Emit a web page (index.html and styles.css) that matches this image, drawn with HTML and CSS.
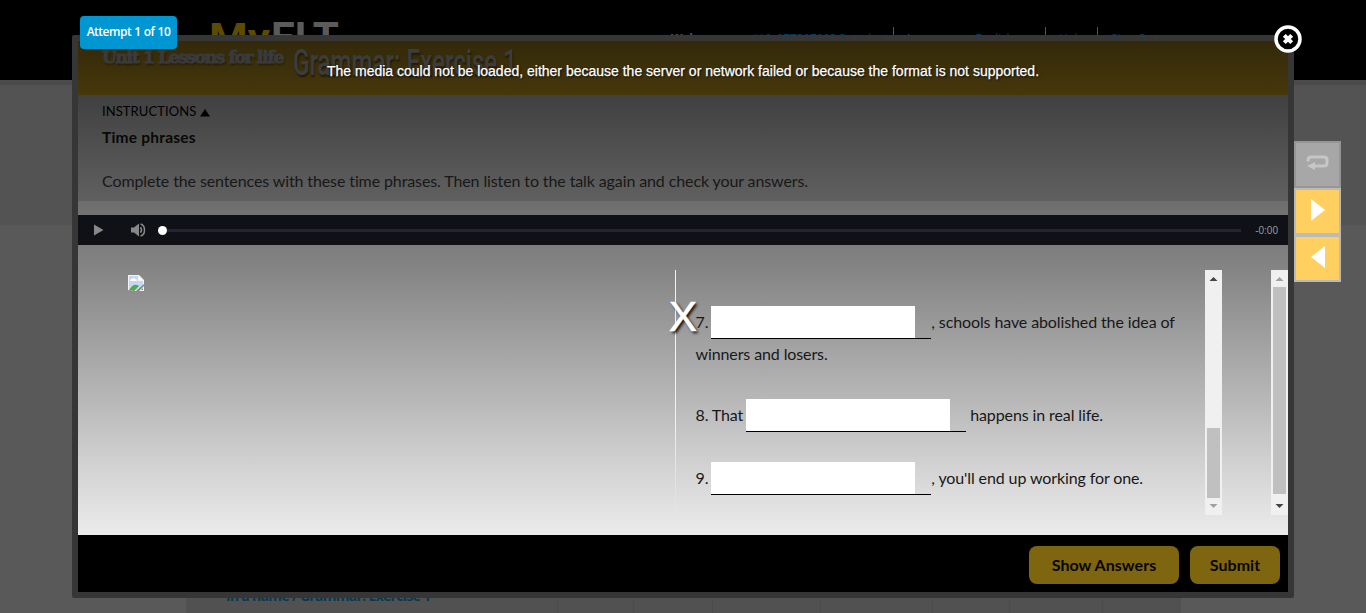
FILE: index.html
```
<!DOCTYPE html>
<html lang="en">
<head>
<meta charset="utf-8">
<title>Grammar: Exercise 1</title>
<link rel="stylesheet" href="styles.css">
</head>
<body>
<header class="site-header">
  <svg class="logo" width="150" height="40"><text class="logo-my" x="-1" y="38" textLength="61" lengthAdjust="spacingAndGlyphs">My</text><text class="logo-elt" x="61" y="38" textLength="68" lengthAdjust="spacingAndGlyphs">ELT</text></svg>
  <nav class="user-nav">
    <span class="welcome">Welcome, <a>ji10_977297993@student</a></span>
    <span class="language">Language: <a>English ▼</a></span>
    <span class="help"><a>Help</a></span>
    <span class="signout"><a>Sign Out</a></span>
  </nav>
</header>
<div class="band"></div>
<main class="page-body">
  <div class="results"><div class="result-name">In a name / Grammar: Exercise 1</div><div></div><div></div><div></div><div></div><div></div><div></div></div>
</main>

<section class="modal">
  <div class="modal-header">
    <span class="unit">Unit 1 Lessons for life</span>
    <svg class="exercise" width="230" height="46"><text x="0" y="34" textLength="224" lengthAdjust="spacingAndGlyphs">Grammar: Exercise 1</text></svg>
  </div>
  <div class="instructions">
    <div class="toggle">INSTRUCTIONS <svg width="10" height="8"><path d="M0 7.500L5 0l5 7.500z"/></svg></div>
    <div class="topic">Time phrases</div>
    <div class="direction">Complete the sentences with these time phrases. Then listen to the talk again and check your answers.</div>
  </div>
  <div class="spacer"></div>
  <div class="player">
    <svg class="play" width="10" height="12"><path d="M0 .5L9.500 6 0 11.500z"/></svg>
    <svg class="volume" width="15" height="14"><path d="M0 4.500h3L8 .5v13L3 9.500H0z"/><path class="wave" d="M9.500 4.200q2 2.800 0 5.600M9.500 1q4 1 4 6t-4 6"/></svg>
    <div class="knob"></div><div class="track"></div>
    <span class="time">-0:00</span>
  </div>
  <div class="content">
    <div class="picture"><svg width="16" height="16"><path fill="#f4f4f4" d="M0 0h11l5 5v11H0z"/><path fill="#c5d7f5" d="M1 1h9v5h5v4l-6 5H1z"/><path fill="#fff" d="M2 6q0-2 2-2 2-2 3 0 2 0 2 2z"/><path fill="#4bb243" d="M1 15q5-8 10-4l-4 4zM13 15l2-2v2z"/><path fill="#999" d="M0 15h7v1H0z"/><path fill="#fff" d="M11 2l3 3h-3z"/><path fill="#858585" d="M8 16l8-7v2l-5 5z"/></svg></div>
    <div class="questions">
      <p class="q q7">7. <span class="blank"><input></span>, schools have abolished the idea of<br><span class="second-line">winners and losers.</span></p>
      <p class="q q8">8. That <span class="blank"><input></span> happens in real life.</p>
      <p class="q q9">9. <span class="blank"><input></span>, you'll end up working for one.</p>
    </div>
    <div class="scrollbar inner"><svg width="17" height="17"><path class="on" d="M4.500 11l4-4 4 4z"/></svg><div class="thumb"></div><svg width="17" height="17"><path class="off" d="M4.500 6l4 4 4-4z"/></svg></div>
    <div class="scrollbar outer"><svg width="17" height="17"><path class="off" d="M4.500 11l4-4 4 4z"/></svg><div class="thumb"></div><svg width="17" height="17"><path class="on" d="M4.500 6l4 4 4-4z"/></svg></div>
  </div>
  <div class="modal-footer"><button class="show">Show Answers</button><button class="submit">Submit</button></div>
</section>

<div class="attempt">Attempt 1 of 10</div>
<div class="media-error">The media could not be loaded, either because the server or network failed or because the format is not supported.</div>
<div class="error-close">X</div>
<svg class="close" width="30" height="30"><circle cx="15" cy="15" r="12" /><path d="M11.300 11.300l7.400 7.400M18.700 11.300l-7.400 7.400"/></svg>
<nav class="side-nav">
  <div class="side repeat"><svg width="23" height="15"><path class="loop" d="M2 6.500V5Q2 2 5 2h13q3 0 3 3v3q0 3-3 3H8"/><path class="head" d="M1 11l8-4v8z"/></svg></div>
  <div class="side next"><svg width="14" height="22"><path d="M0 0l14 11L0 22z"/></svg></div>
  <div class="side prev"><svg width="14" height="22"><path d="M14 0v22L0 11z"/></svg></div>
</nav>
</body>
</html>
```
FILE: styles.css
```
* { box-sizing: border-box; }
body { margin: 0; height: 613px; overflow: hidden; position: relative; background: #595959; font-family: Lato, sans-serif; font-size: 16px; color: #181818; }
svg { display: block; flex: none; }
.site-header { height: 80px; background: #000; display: flex; padding: 14px 0 0 210px; }
.logo { overflow: visible; }
.logo text { font: bold 42px Roboto, sans-serif; }
.logo .logo-my { font-size: 40px; fill: #5c4b00; }
.logo .logo-elt { fill: #5b5b5b; }
.user-nav { display: flex; margin: 13px 0 0 311px; height: 30px; font: 12px/23px "Open Sans", sans-serif; color: #555; white-space: nowrap; }
.user-nav a { color: #003b5b; }
.user-nav span { border-right: 1px solid #555; }
.welcome { width: 223px; font-weight: bold; letter-spacing: -.2px; }
.welcome a { margin-left: 22px; font-weight: normal; }
.language { width: 152px; padding-left: 13px; }
.language a { margin-left: 8px; letter-spacing: -.2px; }
.help { width: 52px; padding-left: 13px; }
.user-nav .signout { padding-left: 13px; border: 0; }
.band { height: 145px; background: #535353; border-top: 5px solid #4b4b4b; }
.page-body { height: 388px; padding: 358px 185px 0 186px; }
.results { height: 30px; background: #515151; display: grid; grid-template-columns: 372px 76px 79px 108px 112px 77px 93px 78px; }
.results div { border-right: 1px solid #4c4c4c; }
.results .result-name { padding-left: 40px; font: bold 14px/26px "Open Sans", sans-serif; letter-spacing: -.7px; color: #063a52; white-space: nowrap; }
.modal { position: absolute; left: 72px; top: 35px; width: 1222px; height: 563px; border: 6px solid #363636; border-radius: 2px; display: flex; flex-direction: column; overflow: hidden; }
.modal-header { height: 54px; background: linear-gradient(#33290a, #46380a); display: flex; padding-left: 24px; color: #3a3a3c; }
.unit { width: 191px; font: 900 17px/32px "DejaVu Serif", serif; letter-spacing: -1.300px; white-space: nowrap; text-shadow: 1px 2px 2px #211b05; -webkit-text-stroke: 1px #3a3a3c; }
.exercise { overflow: visible; }
.exercise text { font: 500 36px Roboto, sans-serif; fill: #3c3c3e; text-shadow: 1px 2px 2px #211b05; }
.instructions { height: 106px; padding: 7px 24px 0; background: linear-gradient(#404040, #606060); }
.toggle { display: flex; gap: 4px; align-items: center; font-size: 13px; line-height: 18px; letter-spacing: .08px; color: #000; }
.toggle svg { margin-top: 3px; }
.topic { font-weight: bold; font-size: 15.500px; line-height: 20px; letter-spacing: .22px; margin-top: 7px; color: #080808; }
.direction { line-height: 20px; margin-top: 24px; letter-spacing: -.11px; }
.spacer { height: 14px; background: linear-gradient(#6d6d6d, #747474); }
.player { height: 30px; background: #101116; display: flex; align-items: center; padding: 0 10px 0 16px; }
.play { fill: #888; }
.volume { margin-left: 27px; fill: #888; }
.wave { fill: none; stroke: #888; stroke-width: 1.500; }
.knob { width: 9px; height: 9px; border-radius: 50%; background: #fff; margin-left: 12px; }
.track { height: 3px; flex: 1; background: #22262f; }
.time { width: 37px; text-align: right; color: #999; font: 10px "Liberation Sans", sans-serif; }
.content { height: 290px; padding: 25px 0 20px 50px; display: flex; background: linear-gradient(#7d7d7d 0%, #858585 9%, #9c9c9c 29%, #b7b7b7 53%, #d2d2d2 76%, #e2e2e2 91%, #ebebeb 100%); }
.picture { width: 547px; padding-top: 5px; }
.questions { width: 530px; padding: 36px 0 0 19.500px; border-left: 1px solid; border-image: linear-gradient(#f2f2f2 65%, transparent) 1; white-space: nowrap; letter-spacing: -.11px; }
.q { margin: 0; line-height: 32px; }
.q7 { height: 93px; }
.q8 { height: 63px; }
.second-line { display: inline-block; margin-top: -2px; vertical-align: top; }
.blank { display: inline-block; width: 220px; height: 33px; border-bottom: 1px solid #000; vertical-align: middle; margin: -1px 0 1px -1px; }
.blank input { display: block; width: 204px; height: 32px; border: 0; padding: 0; background: #fff; }
.scrollbar { width: 17px; height: 245px; background: #f0f0f0; display: flex; flex-direction: column; }
.scrollbar .thumb { width: 13px; margin: 0 2px; background: #c0c0c0; }
.inner .thumb { height: 70px; margin-top: 141px; }
.outer { margin-left: 49px; }
.outer .thumb { height: 207px; margin-bottom: 4px; }
.on { fill: #444; }
.off { fill: #a0a0a0; }
.modal-footer { height: 57px; background: #000; display: flex; justify-content: flex-end; gap: 11px; padding: 11px 8px 0; }
button { height: 38px; border: 0; border-radius: 8px; padding: 0 0 1px; background: #7e6510; font: bold 16px Lato, sans-serif; letter-spacing: .05px; color: #080600; }
.show { width: 150px; }
.submit { width: 90px; }
.attempt { position: absolute; left: 80px; top: 16px; width: 97px; height: 33px; border-radius: 4px; background: #0096d2; color: #fff; font: 600 12px/32px "Open Sans", sans-serif; letter-spacing: -.5px; word-spacing: .5px; text-align: center; white-space: nowrap; }
.media-error { position: absolute; left: 78px; top: 62px; width: 1210px; text-align: center; color: #fff; font: 14px/18px "Liberation Sans", sans-serif; text-shadow: 1px 1px 2px #000; -webkit-text-stroke: .25px #fff; }
.error-close { position: absolute; left: 669px; top: 292px; font: 42px/50px "Liberation Sans", sans-serif; color: #fff; text-shadow: 2px 2px 3px #000; -webkit-text-stroke: .7px #fff; }
.close { position: absolute; left: 1273px; top: 24px; fill: #000; stroke: #fff; stroke-width: 3.500; }
.close path { stroke-width: 4; }
.side-nav { position: absolute; left: 1294px; top: 141px; width: 47px; }
.side { height: 47px; border: 2px solid #bababa; background: #ffcf60; display: flex; align-items: center; justify-content: center; padding-bottom: 4px; fill: #fff; }
.repeat { border-color: #969696; background: #a7a7a7; }
.loop { fill: none; stroke: #c6c6c6; stroke-width: 3; }
.head { fill: #c6c6c6; }
```
